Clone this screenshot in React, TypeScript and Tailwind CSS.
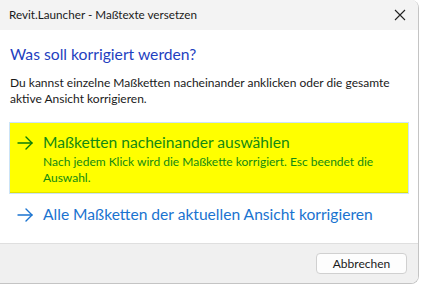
import React from "react";

const Arrow = ({ color }: { color: string }) => (
  <svg width="16" height="14" viewBox="0 0 16 14" fill="none" stroke={color} strokeWidth="1.4" strokeLinecap="round" strokeLinejoin="round">
    <path d="M1 7H15" />
    <path d="M9 1L15 7L9 13" />
  </svg>
);

export default function App() {
  return (
    <div className="w-[421px] h-[286px] bg-white relative overflow-hidden" style={{ fontFamily: '"Segoe UI", Lato, "Noto Sans", sans-serif' }}>
      <div className="w-[419px] h-[284px] flex flex-col border-r border-b border-[#c4c4c4] rounded-tr-[8px] rounded-br-[8px] overflow-hidden bg-white">
        <div className="h-[30px] bg-[#f3f3f3] flex items-center justify-between pl-[9px] pr-[12px] shrink-0">
          <span className="text-[11.7px] text-[#1a1a1a]">Revit.Launcher - Maßtexte versetzen</span>
          <svg width="12" height="12" viewBox="0 0 12 12" stroke="#222" strokeWidth="1.1">
            <path d="M1 1L11 11M11 1L1 11" />
          </svg>
        </div>
        <div className="flex-1 flex flex-col pl-[10px] pr-[8px]">
          <div className="mt-[13px] text-[15.7px] leading-[22px] text-[#1f3fbf]">Was soll korrigiert werden?</div>
          <div className="mt-[10px] text-[12px] leading-[16px] text-[#1a1a1a] w-[395px]">
            Du kannst einzelne Maßketten nacheinander anklicken oder die gesamte aktive Ansicht korrigieren.
          </div>
          <div className="mt-[15px] -ml-[1px] w-[400px] border border-[#cce4f7] p-0">
            <div className="bg-[#ffff00] border-b border-[#e2e200] flex pl-[7px] pt-[9px] pb-[6px]">
              <div className="w-[26px] pt-[4px]">
                <Arrow color="#0a7d0a" />
              </div>
              <div className="flex flex-col">
                <div className="text-[15.6px] leading-[20px] text-[#138a13]">Maßketten nacheinander auswählen</div>
                <div className="text-[12px] leading-[16px] text-[#138a13] w-[345px] mt-[2px]">
                  Nach jedem Klick wird die Maßkette korrigiert. Esc beendet die Auswahl.
                </div>
              </div>
            </div>
          </div>
          <div className="flex pl-[7px] mt-[10px]">
            <div className="w-[26px] pt-[4px]">
              <Arrow color="#1a73d0" />
            </div>
            <div className="text-[15.6px] leading-[20px] text-[#1a73d0]">Alle Maßketten der aktuellen Ansicht korrigieren</div>
          </div>
        </div>
        <div className="h-[40px] bg-[#f0f0f0] border-t border-[#dfdfdf] flex items-start justify-end pr-[11px] pt-[9px] shrink-0">
          <button className="w-[91px] h-[21px] bg-[#fdfdfd] border border-[#d0d0d0] rounded-[4px] text-[12px] text-[#1a1a1a] leading-none">Abbrechen</button>
        </div>
      </div>
    </div>
  );
}
